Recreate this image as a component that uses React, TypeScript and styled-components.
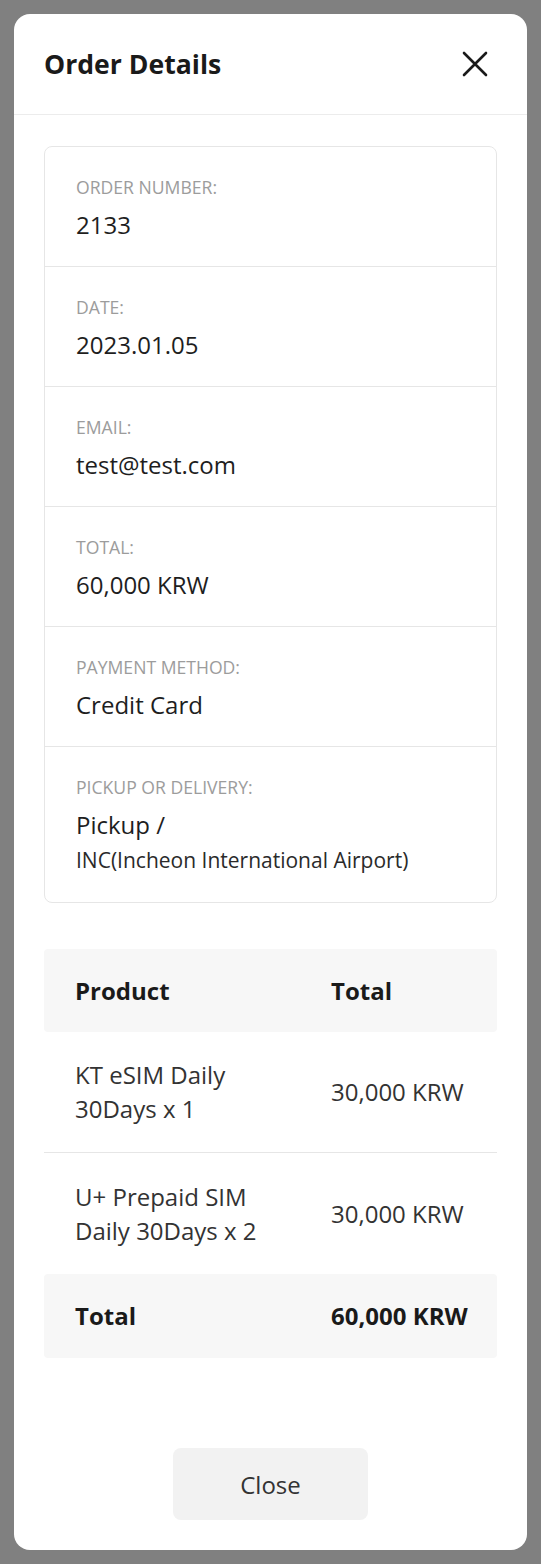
import styled, { createGlobalStyle } from "styled-components";

const GlobalStyle = createGlobalStyle`
  html, body {
    margin: 0;
    padding: 0;
    background: #808080;
  }
  * {
    box-sizing: border-box;
  }
`;

const Overlay = styled.div`
  min-height: 1564px;
  padding: 14px;
  font-family: "Open Sans", "Noto Sans", sans-serif;
`;

const Modal = styled.div`
  width: 513px;
  height: 1536px;
  background: #fff;
  border-radius: 16px;
  display: flex;
  flex-direction: column;
  overflow: hidden;
`;

const Header = styled.div`
  height: 101px;
  display: flex;
  align-items: center;
  justify-content: space-between;
  padding: 0 39px 0 30px;
  border-bottom: 1px solid #ececec;
`;

const Title = styled.h2`
  margin: 0;
  font-size: 26.6px;
  font-weight: 700;
  color: #1a1a1a;
`;

const IconButton = styled.button`
  border: 0;
  background: none;
  padding: 0;
  width: 26px;
  height: 26px;
  display: flex;
  cursor: pointer;
`;

const Body = styled.div`
  flex: 1;
  display: flex;
  flex-direction: column;
  padding: 31px 30px 30px;
`;

const InfoCard = styled.div`
  border: 1px solid #e6e6e6;
  border-radius: 8px;
`;

const InfoRow = styled.div`
  padding: 28px 31px 0;
  height: 120px;
  border-bottom: 1px solid #e6e6e6;
  &:last-child {
    border-bottom: 0;
    height: 155px;
  }
`;

const Label = styled.div`
  font-size: 17.6px;
  line-height: 24px;
  color: #9c9c9c;
  text-transform: uppercase;
`;

const Value = styled.div`
  margin-top: 10px;
  font-size: 24px;
  line-height: 32px;
  color: #1e1e1e;
`;

const SubValue = styled.div`
  margin-top: 4px;
  font-size: 21px;
  line-height: 30px;
  color: #2a2a2a;
`;

const Table = styled.div`
  margin-top: 46px;
`;

const TRow = styled.div<{ $shaded?: boolean; $height: number }>`
  display: grid;
  grid-template-columns: 256px 1fr;
  align-items: center;
  height: ${({ $height }) => $height}px;
  padding-left: 31px;
  background: ${({ $shaded }) => ($shaded ? "#f7f7f7" : "transparent")};
  border-radius: ${({ $shaded }) => ($shaded ? "4px" : "0")};
  border-bottom: ${({ $shaded }) => ($shaded ? "0" : "1px solid #e6e6e6")};
  &:nth-last-child(2) {
    border-bottom: 0;
  }
`;

const Cell = styled.div<{ $bold?: boolean }>`
  font-size: 24px;
  line-height: 34px;
  font-weight: ${({ $bold }) => ($bold ? 700 : 400)};
  color: ${({ $bold }) => ($bold ? "#1a1a1a" : "#333")};
`;

const Footer = styled.div`
  margin-top: auto;
  display: flex;
  justify-content: center;
`;

const CloseButton = styled.button`
  width: 195px;
  height: 72px;
  border: 0;
  border-radius: 8px;
  background: #f2f2f2;
  font-family: "Open Sans", "Noto Sans", sans-serif;
  font-size: 24px;
  color: #333;
  cursor: pointer;
`;

const info = [
  { label: "Order Number:", value: "2133" },
  { label: "Date:", value: "2023.01.05" },
  { label: "Email:", value: "test@test.com" },
  { label: "Total:", value: "60,000 KRW" },
  { label: "Payment Method:", value: "Credit Card" },
];

const products = [
  { name: ["KT eSIM Daily", "30Days x 1"], total: "30,000 KRW" },
  { name: ["U+ Prepaid SIM", "Daily 30Days x 2"], total: "30,000 KRW" },
];

export default function App() {
  return (
    <>
      <GlobalStyle />
      <Overlay>
        <Modal>
          <Header>
            <Title>Order Details</Title>
            <IconButton aria-label="close">
              <svg width="26" height="26" viewBox="0 0 26 26">
                <path
                  d="M2 2 L24 24 M24 2 L2 24"
                  stroke="#1a1a1a"
                  strokeWidth="2.6"
                  strokeLinecap="round"
                />
              </svg>
            </IconButton>
          </Header>
          <Body>
            <InfoCard>
              {info.map((item) => (
                <InfoRow key={item.label}>
                  <Label>{item.label}</Label>
                  <Value>{item.value}</Value>
                </InfoRow>
              ))}
              <InfoRow>
                <Label>Pickup or Delivery:</Label>
                <Value>Pickup /</Value>
                <SubValue>INC(Incheon International Airport)</SubValue>
              </InfoRow>
            </InfoCard>

            <Table>
              <TRow $shaded $height={83}>
                <Cell $bold>Product</Cell>
                <Cell $bold>Total</Cell>
              </TRow>
              {products.map((p) => (
                <TRow key={p.name[0]} $height={121}>
                  <Cell>
                    {p.name[0]}
                    <br />
                    {p.name[1]}
                  </Cell>
                  <Cell>{p.total}</Cell>
                </TRow>
              ))}
              <TRow $shaded $height={84}>
                <Cell $bold>Total</Cell>
                <Cell $bold>60,000 KRW</Cell>
              </TRow>
            </Table>

            <Footer>
              <CloseButton>Close</CloseButton>
            </Footer>
          </Body>
        </Modal>
      </Overlay>
    </>
  );
}
